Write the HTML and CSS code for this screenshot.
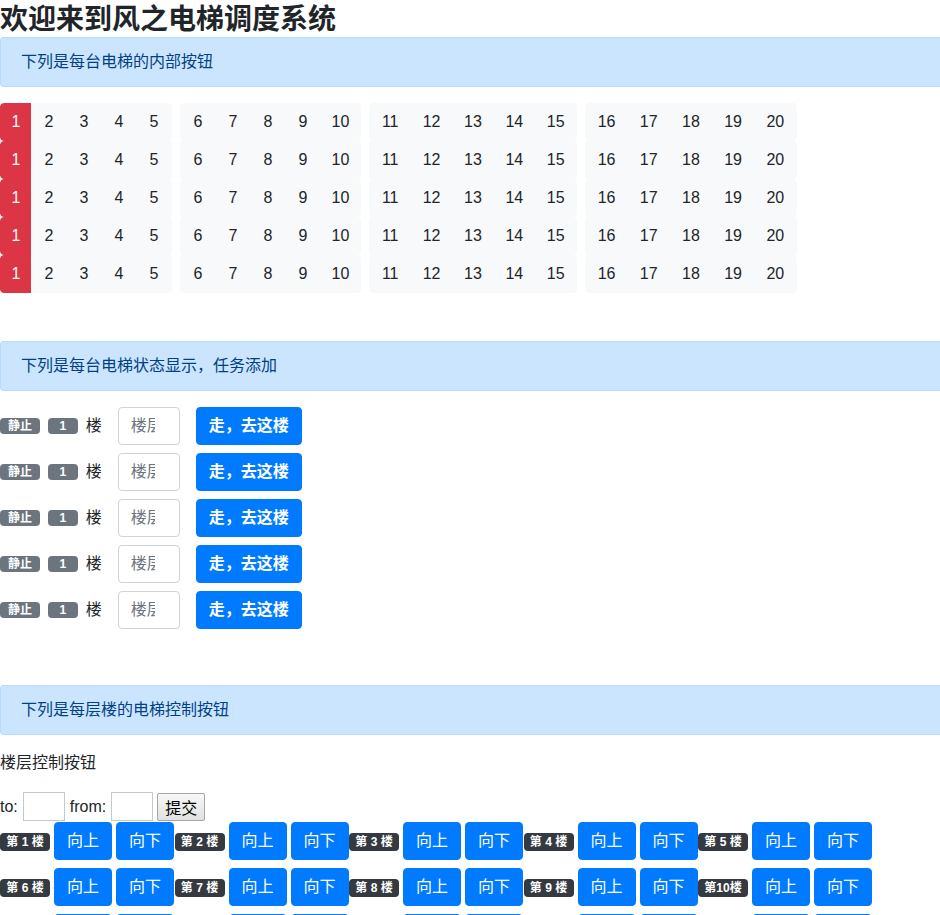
FILE: index.html
```html
<!DOCTYPE html>
<html lang="zh">
<head>
<meta charset="utf-8">
<title>风之电梯调度系统</title>
<link rel="stylesheet" href="styles.css">
</head>
<body>
<h1 class="title">欢迎来到风之电梯调度系统</h1>

<div class="alert">下列是每台电梯的内部按钮</div>
<div class="panel-rows">
  <div class="toolbar">
    <div class="group"><button class="btn btn-danger b1">1</button><button class="btn btn-light b1">2</button><button class="btn btn-light b1">3</button><button class="btn btn-light b1">4</button><button class="btn btn-light b1">5</button></div>
    <div class="group"><button class="btn btn-light b1">6</button><button class="btn btn-light b1">7</button><button class="btn btn-light b1">8</button><button class="btn btn-light b1">9</button><button class="btn btn-light b10">10</button></div>
    <div class="group"><button class="btn btn-light b2">11</button><button class="btn btn-light b2">12</button><button class="btn btn-light b2">13</button><button class="btn btn-light b2">14</button><button class="btn btn-light b2">15</button></div>
    <div class="group"><button class="btn btn-light b3">16</button><button class="btn btn-light b3">17</button><button class="btn btn-light b3">18</button><button class="btn btn-light b3">19</button><button class="btn btn-light b3">20</button></div>
  </div>
  <div class="toolbar">
    <div class="group"><button class="btn btn-danger b1">1</button><button class="btn btn-light b1">2</button><button class="btn btn-light b1">3</button><button class="btn btn-light b1">4</button><button class="btn btn-light b1">5</button></div>
    <div class="group"><button class="btn btn-light b1">6</button><button class="btn btn-light b1">7</button><button class="btn btn-light b1">8</button><button class="btn btn-light b1">9</button><button class="btn btn-light b10">10</button></div>
    <div class="group"><button class="btn btn-light b2">11</button><button class="btn btn-light b2">12</button><button class="btn btn-light b2">13</button><button class="btn btn-light b2">14</button><button class="btn btn-light b2">15</button></div>
    <div class="group"><button class="btn btn-light b3">16</button><button class="btn btn-light b3">17</button><button class="btn btn-light b3">18</button><button class="btn btn-light b3">19</button><button class="btn btn-light b3">20</button></div>
  </div>
  <div class="toolbar">
    <div class="group"><button class="btn btn-danger b1">1</button><button class="btn btn-light b1">2</button><button class="btn btn-light b1">3</button><button class="btn btn-light b1">4</button><button class="btn btn-light b1">5</button></div>
    <div class="group"><button class="btn btn-light b1">6</button><button class="btn btn-light b1">7</button><button class="btn btn-light b1">8</button><button class="btn btn-light b1">9</button><button class="btn btn-light b10">10</button></div>
    <div class="group"><button class="btn btn-light b2">11</button><button class="btn btn-light b2">12</button><button class="btn btn-light b2">13</button><button class="btn btn-light b2">14</button><button class="btn btn-light b2">15</button></div>
    <div class="group"><button class="btn btn-light b3">16</button><button class="btn btn-light b3">17</button><button class="btn btn-light b3">18</button><button class="btn btn-light b3">19</button><button class="btn btn-light b3">20</button></div>
  </div>
  <div class="toolbar">
    <div class="group"><button class="btn btn-danger b1">1</button><button class="btn btn-light b1">2</button><button class="btn btn-light b1">3</button><button class="btn btn-light b1">4</button><button class="btn btn-light b1">5</button></div>
    <div class="group"><button class="btn btn-light b1">6</button><button class="btn btn-light b1">7</button><button class="btn btn-light b1">8</button><button class="btn btn-light b1">9</button><button class="btn btn-light b10">10</button></div>
    <div class="group"><button class="btn btn-light b2">11</button><button class="btn btn-light b2">12</button><button class="btn btn-light b2">13</button><button class="btn btn-light b2">14</button><button class="btn btn-light b2">15</button></div>
    <div class="group"><button class="btn btn-light b3">16</button><button class="btn btn-light b3">17</button><button class="btn btn-light b3">18</button><button class="btn btn-light b3">19</button><button class="btn btn-light b3">20</button></div>
  </div>
  <div class="toolbar">
    <div class="group"><button class="btn btn-danger b1">1</button><button class="btn btn-light b1">2</button><button class="btn btn-light b1">3</button><button class="btn btn-light b1">4</button><button class="btn btn-light b1">5</button></div>
    <div class="group"><button class="btn btn-light b1">6</button><button class="btn btn-light b1">7</button><button class="btn btn-light b1">8</button><button class="btn btn-light b1">9</button><button class="btn btn-light b10">10</button></div>
    <div class="group"><button class="btn btn-light b2">11</button><button class="btn btn-light b2">12</button><button class="btn btn-light b2">13</button><button class="btn btn-light b2">14</button><button class="btn btn-light b2">15</button></div>
    <div class="group"><button class="btn btn-light b3">16</button><button class="btn btn-light b3">17</button><button class="btn btn-light b3">18</button><button class="btn btn-light b3">19</button><button class="btn btn-light b3">20</button></div>
  </div>
</div>

<div class="alert">下列是每台电梯状态显示，任务添加</div>
<div class="status-rows">
  <div class="status-row"><span class="badge badge-secondary">静止</span><span class="badge badge-secondary badge-num">1</span><span class="floor-label">楼</span><input class="form-control" type="text" placeholder="楼层"><button class="btn btn-primary btn-go">走，去这楼</button></div>
  <div class="status-row"><span class="badge badge-secondary">静止</span><span class="badge badge-secondary badge-num">1</span><span class="floor-label">楼</span><input class="form-control" type="text" placeholder="楼层"><button class="btn btn-primary btn-go">走，去这楼</button></div>
  <div class="status-row"><span class="badge badge-secondary">静止</span><span class="badge badge-secondary badge-num">1</span><span class="floor-label">楼</span><input class="form-control" type="text" placeholder="楼层"><button class="btn btn-primary btn-go">走，去这楼</button></div>
  <div class="status-row"><span class="badge badge-secondary">静止</span><span class="badge badge-secondary badge-num">1</span><span class="floor-label">楼</span><input class="form-control" type="text" placeholder="楼层"><button class="btn btn-primary btn-go">走，去这楼</button></div>
  <div class="status-row"><span class="badge badge-secondary">静止</span><span class="badge badge-secondary badge-num">1</span><span class="floor-label">楼</span><input class="form-control" type="text" placeholder="楼层"><button class="btn btn-primary btn-go">走，去这楼</button></div>
</div>

<div class="alert">下列是每层楼的电梯控制按钮</div>
<p class="label">楼层控制按钮</p>
<form class="req-form">
  <span>to:</span><input class="plain-input" type="text"><span class="from">from:</span><input class="plain-input" type="text"><button type="button" class="plain-btn">提交</button>
</form>
<div class="floors">
  <div class="floor"><span class="badge badge-dark">第 1 楼</span><button class="btn btn-primary">向上</button><button class="btn btn-primary">向下</button></div>
  <div class="floor"><span class="badge badge-dark">第 2 楼</span><button class="btn btn-primary">向上</button><button class="btn btn-primary">向下</button></div>
  <div class="floor"><span class="badge badge-dark">第 3 楼</span><button class="btn btn-primary">向上</button><button class="btn btn-primary">向下</button></div>
  <div class="floor"><span class="badge badge-dark">第 4 楼</span><button class="btn btn-primary">向上</button><button class="btn btn-primary">向下</button></div>
  <div class="floor"><span class="badge badge-dark">第 5 楼</span><button class="btn btn-primary">向上</button><button class="btn btn-primary">向下</button></div>
  <div class="floor"><span class="badge badge-dark">第 6 楼</span><button class="btn btn-primary">向上</button><button class="btn btn-primary">向下</button></div>
  <div class="floor"><span class="badge badge-dark">第 7 楼</span><button class="btn btn-primary">向上</button><button class="btn btn-primary">向下</button></div>
  <div class="floor"><span class="badge badge-dark">第 8 楼</span><button class="btn btn-primary">向上</button><button class="btn btn-primary">向下</button></div>
  <div class="floor"><span class="badge badge-dark">第 9 楼</span><button class="btn btn-primary">向上</button><button class="btn btn-primary">向下</button></div>
  <div class="floor"><span class="badge badge-dark">第10楼</span><button class="btn btn-primary">向上</button><button class="btn btn-primary">向下</button></div>
  <div class="floor"><span class="badge badge-dark">第11楼</span><button class="btn btn-primary">向上</button><button class="btn btn-primary">向下</button></div>
  <div class="floor"><span class="badge badge-dark">第12楼</span><button class="btn btn-primary">向上</button><button class="btn btn-primary">向下</button></div>
  <div class="floor"><span class="badge badge-dark">第13楼</span><button class="btn btn-primary">向上</button><button class="btn btn-primary">向下</button></div>
  <div class="floor"><span class="badge badge-dark">第14楼</span><button class="btn btn-primary">向上</button><button class="btn btn-primary">向下</button></div>
  <div class="floor"><span class="badge badge-dark">第15楼</span><button class="btn btn-primary">向上</button><button class="btn btn-primary">向下</button></div>
</div>
</body>
</html>
```

FILE: styles.css
```css
* { box-sizing: border-box; }

body {
  margin: 0;
  font-family: "Liberation Sans", "Noto Sans CJK SC", sans-serif;
  font-size: 16px;
  line-height: 1.5;
  color: #212529;
  background: #fff;
}

.title {
  margin: 0 0 3px 0;
  font-size: 28px;
  font-weight: 700;
  line-height: 34px;
  color: #212529;
  font-family: "Noto Sans CJK SC", sans-serif;
}

.alert {
  padding: 12px 20px;
  margin-bottom: 16px;
  border: 1px solid #b8daff;
  border-right: 0;
  border-radius: 4px 0 0 4px;
  background: #cce5ff;
  color: #004085;
  line-height: 24px;
  font-size: 16px;
}

.panel-rows {
  margin-bottom: 48px;
}

.toolbar {
  display: flex;
}

.group {
  display: inline-flex;
  margin-right: 8px;
}

.btn {
  display: inline-block;
  font-family: inherit;
  font-size: 16px;
  line-height: 24px;
  padding: 6px 12px;
  border: 1px solid transparent;
  border-radius: 4px;
  text-align: center;
  cursor: pointer;
  font-weight: 400;
}

.group .btn {
  border-radius: 0;
  padding-left: 0;
  padding-right: 0;
}
.group .btn + .btn {
  margin-left: -1px;
}
.group .btn:first-child {
  border-radius: 4px 0 0 4px;
}
.group .btn:last-child {
  border-radius: 0 4px 4px 0;
}

.group .b1 { width: 36px; }
.group .btn-danger.b1 { width: 32px; }
.group .b10 { width: 41px; }
.group .b2 { width: 42.4px; }
.group .b3 { width: 43.2px; }

.btn-light {
  background: #f8f9fa;
  border-color: #f8f9fa;
  color: #212529;
}

.btn-danger {
  background: #dc3545;
  border-color: #dc3545;
  color: #fff;
}

.btn-primary {
  background: #007bff;
  border-color: #007bff;
  color: #fff;
}

.status-rows {
  display: flex;
  flex-direction: column;
  gap: 8px;
  margin-bottom: 56px;
}

.status-row {
  display: flex;
  align-items: center;
}

.badge {
  display: inline-block;
  font-size: 12px;
  font-weight: 700;
  line-height: 1;
  color: #fff;
  border-radius: 4px;
  white-space: nowrap;
  text-align: center;
}

.badge-secondary {
  background: #6c757d;
  padding: 2px 8px;
}

.badge-num {
  margin-left: 8px;
  padding: 2px 11.5px;
}

.floor-label {
  margin-left: 8px;
  font-size: 16px;
}

.form-control {
  margin-left: 16px;
  width: 62px;
  height: 38px;
  padding: 6px 24px 6px 12px;
  font-family: inherit;
  font-size: 16px;
  line-height: 24px;
  border: 1px solid #ced4da;
  border-radius: 4px;
  color: #495057;
}
.form-control::placeholder {
  color: #6c757d;
}

.btn-go {
  margin-left: 16px;
  font-weight: 700;
}

.label {
  margin: 0 0 16px 0;
  font-size: 16px;
}

.req-form {
  display: flex;
  align-items: center;
  height: 31px;
  margin: 0;
  font-size: 16px;
}

.plain-input {
  width: 42px;
  height: 29px;
  margin-left: 5px;
  border: 1px solid #c8c8c8;
  padding: 1px 2px;
  font-size: 16px;
}

.from {
  margin-left: 5px;
}

.plain-btn {
  margin-left: 4px;
  height: 28px;
  padding: 0 7px;
  font-family: "Noto Sans CJK SC", sans-serif;
  font-size: 16px;
  line-height: 26px;
  color: #000;
  background: linear-gradient(#f8f8f8, #e1e1e1);
  border: 1px solid #a6a6a6;
  border-radius: 2px;
}

.floors {
  display: flex;
  flex-wrap: wrap;
  row-gap: 8px;
}

.floor {
  display: flex;
  align-items: baseline;
  width: 174.5px;
}

.floor .btn {
  margin-left: 4px;
  width: 58px;
  padding-left: 0;
  padding-right: 0;
}

.badge-dark {
  background: #343a40;
  width: 50px;
  padding: 3px 0;
}
```
